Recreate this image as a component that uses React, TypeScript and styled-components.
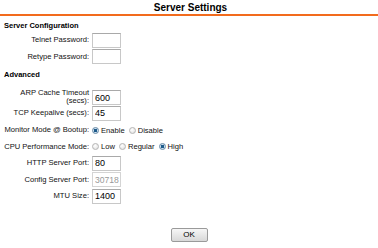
import React from 'react';
import styled, { createGlobalStyle } from 'styled-components';

const GlobalStyle = createGlobalStyle`
  html, body {
    margin: 0;
    padding: 0;
    background: #ffffff;
  }
  body {
    font-family: 'Liberation Sans', Arial, sans-serif;
    color: #000000;
  }
`;

interface FieldProps {
  label: React.ReactNode;
  tall?: boolean;
  children: React.ReactNode;
}

const Field = ({ label, tall, children }: FieldProps) => (
  <SRow tall={tall}>
    <SLabel>{label}</SLabel>
    <SControl>{children}</SControl>
  </SRow>
);

interface RadioProps {
  name: string;
  label: string;
  checked?: boolean;
}

const Radio = ({ name, label, checked }: RadioProps) => (
  <SRadioLabel>
    <SRadio type="radio" name={name} defaultChecked={checked} />
    {label}
  </SRadioLabel>
);

const App = () => (
  <SPage>
    <GlobalStyle />
    <SHeader>
      <STitle>Server Settings</STitle>
    </SHeader>

    <SSection>
      <SSectionTitle>Server Configuration</SSectionTitle>
      <Field label="Telnet Password:">
        <SInput type="password" />
      </Field>
      <Field label="Retype Password:">
        <SInput type="password" />
      </Field>
    </SSection>

    <SSection>
      <SSectionTitle>Advanced</SSectionTitle>
      <Field label="ARP Cache Timeout (secs):" tall>
        <SInput defaultValue="600" />
      </Field>
      <Field label="TCP Keepalive (secs):">
        <SInput defaultValue="45" />
      </Field>
      <Field label="Monitor Mode @ Bootup:">
        <Radio name="monitor" label="Enable" checked />
        <Radio name="monitor" label="Disable" />
      </Field>
      <Field label="CPU Performance Mode:">
        <Radio name="cpu" label="Low" />
        <Radio name="cpu" label="Regular" />
        <Radio name="cpu" label="High" checked />
      </Field>
      <Field label="HTTP Server Port:">
        <SInput defaultValue="80" />
      </Field>
      <Field label="Config Server Port:">
        <SInput defaultValue="30718" disabled />
      </Field>
      <Field label="MTU Size:">
        <SInput defaultValue="1400" />
      </Field>
    </SSection>

    <SFooter>
      <SButton type="button">OK</SButton>
    </SFooter>
  </SPage>
);

const SPage = styled.div`
  width: 378px;
  height: 248px;
  overflow: hidden;
`;

const SHeader = styled.div`
  height: 14px;
  border-bottom: 2px solid #f26b1d;
  display: flex;
  justify-content: center;
  align-items: flex-end;
`;

const STitle = styled.h1`
  margin: 0;
  font-size: 10px;
  font-weight: bold;
  line-height: 12px;
  padding-left: 3px;
`;

const SSection = styled.div`
  padding: 5px 0 0 3px;
  display: flex;
  flex-direction: column;
`;

const SSectionTitle = styled.div`
  font-size: 7.5px;
  font-weight: bold;
  line-height: 10px;
  padding-left: 1px;
  margin-bottom: 1px;
`;

const SRow = styled.div<{ tall?: boolean }>`
  display: grid;
  grid-template-columns: 86px auto;
  column-gap: 3px;
  align-items: ${({ tall }) => (tall ? 'end' : 'center')};
  height: ${({ tall }) => (tall ? '24px' : '16.6px')};
`;

const SLabel = styled.div`
  font-size: 7.6px;
  line-height: 8px;
  color: #111111;
  text-align: right;
  white-space: normal;
`;

const SControl = styled.div`
  display: flex;
  align-items: center;
  gap: 4px;
`;

const SInput = styled.input`
  box-sizing: border-box;
  width: 29px;
  height: 15px;
  margin: 0;
  padding: 0 1px 0 2px;
  border: 1px solid #c8c8c8;
  border-top-color: #a9a9a9;
  font-family: 'Liberation Sans', Arial, sans-serif;
  font-size: 9px;
  color: #000000;
  background: #ffffff;

  &:disabled {
    color: #999999;
    background: #ffffff;
    border-color: #d4d4d4;
    font-size: 8.6px;
  }
`;

const SRadioLabel = styled.label`
  display: flex;
  align-items: center;
  gap: 2px;
  font-size: 7.6px;
  color: #111111;
`;

const SRadio = styled.input`
  appearance: none;
  width: 7px;
  height: 7px;
  margin: 0;
  border-radius: 50%;
  border: 1px solid #b5b5b5;
  background: radial-gradient(circle at 40% 35%, #ffffff, #dcdcdc);
  box-sizing: border-box;

  &:checked {
    border-color: #6a8ca8;
    background: radial-gradient(circle, #1d5a8a 0 1.6px, #cfe0ee 2px, #9fbbd3 100%);
  }
`;

const SFooter = styled.div`
  display: flex;
  justify-content: center;
  padding: 23px 0 0 0;
`;

const SButton = styled.button`
  width: 37px;
  height: 14px;
  margin: 0;
  padding: 0;
  border: 1px solid #9a9a9a;
  border-radius: 2px;
  background: linear-gradient(#f6f6f6, #d8d8d8);
  font-family: 'Liberation Sans', Arial, sans-serif;
  font-size: 8px;
  color: #000000;
`;

export default App;
